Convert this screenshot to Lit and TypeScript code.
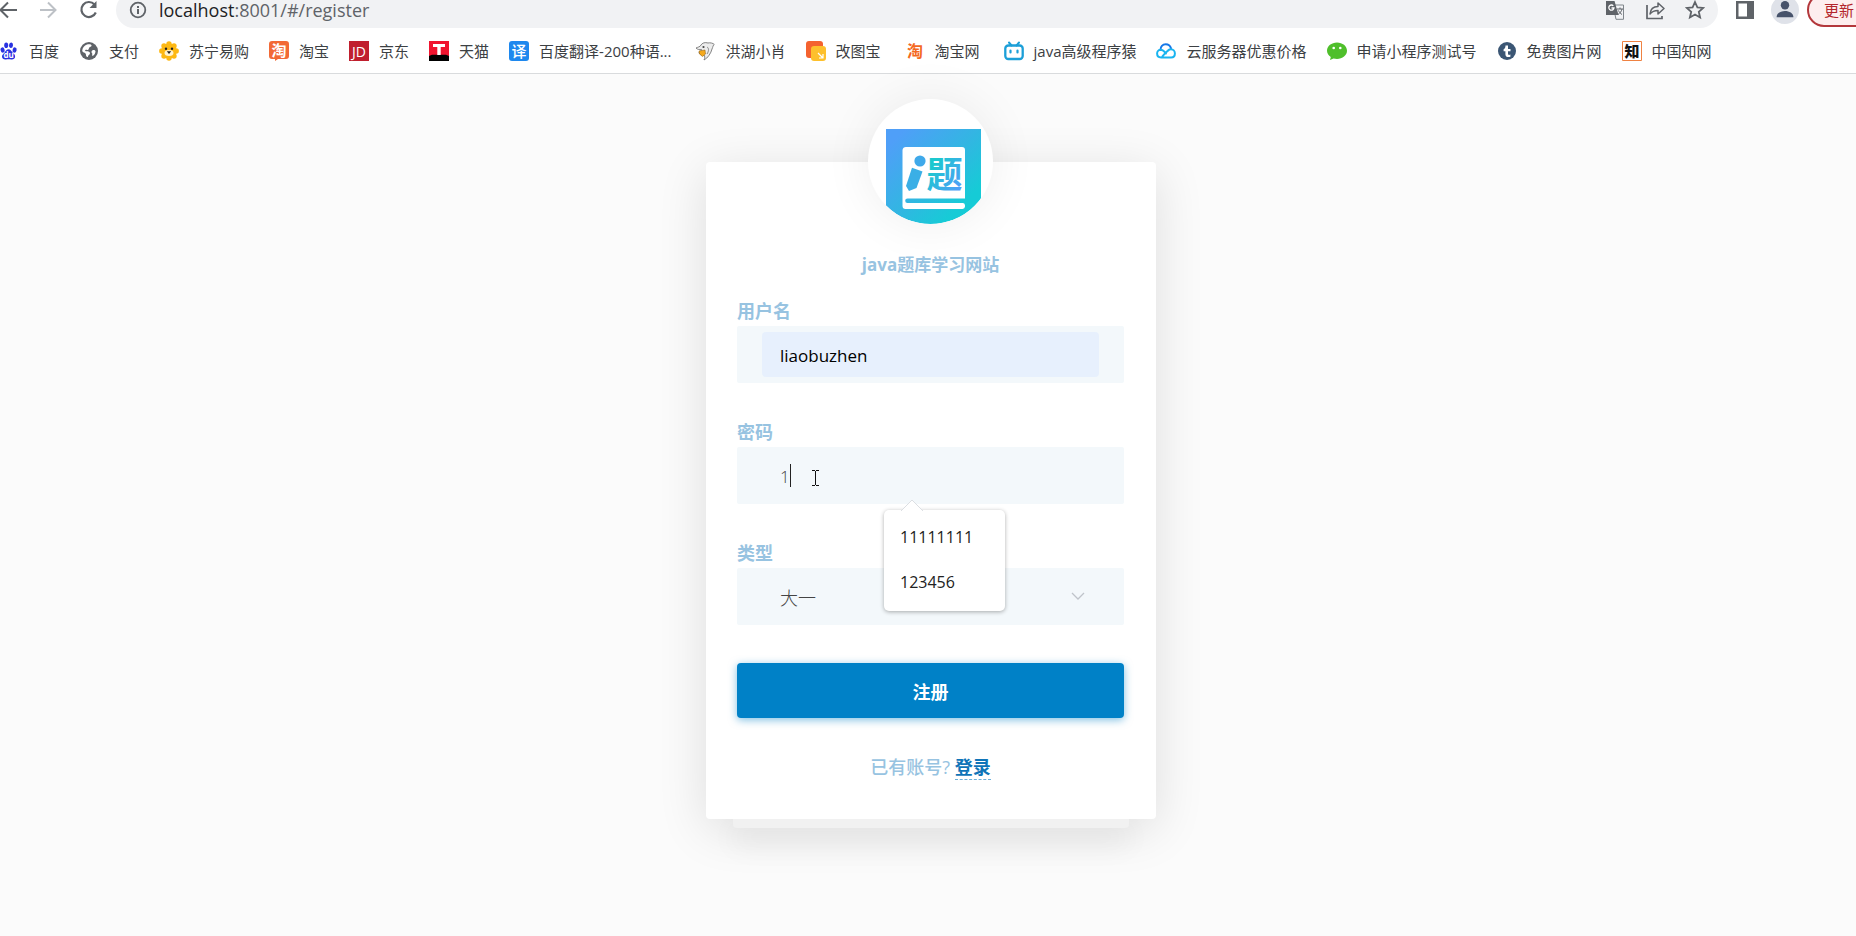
import { LitElement, html, svg, css } from "lit";
import { customElement, state } from "lit/decorators.js";

const icon = (size: number, body: unknown) =>
  html`<svg width=${size} height=${size} viewBox="0 0 20 20" aria-hidden="true">${body}</svg>`;

const bookmarks: { name: string; wide?: boolean; art: unknown }[] = [
  {
    name: "百度",
    art: svg`<g fill="#2932e1">
      <ellipse cx="3.6" cy="9" rx="2" ry="2.7" transform="rotate(-15 3.6 9)"/>
      <ellipse cx="7.2" cy="4.3" rx="2" ry="2.8"/>
      <ellipse cx="12" cy="4.3" rx="2" ry="2.8" transform="rotate(8 12 4.3)"/>
      <ellipse cx="15.6" cy="9" rx="2" ry="2.7" transform="rotate(15 15.6 9)"/>
      <path d="M9.5 8.2c2 0 2.700 1.800 4 3.200 1.300 1.300 2.800 2.200 2.600 4.300-.2 2-2 3-3.800 2.700-1.800-.3-3.600-.3-5.400 0C5 18.700 3.200 17.800 3 15.700c-.1-2 1.400-3 2.600-4.300 1.300-1.400 2-3.200 3.900-3.200z"/></g>
      <text x="9.600" y="17" font-size="8" font-weight="700" fill="#fff" text-anchor="middle">du</text>`,
  },
  {
    name: "支付",
    art: svg`<circle cx="10" cy="10" r="9" fill="#5f6368"/>
      <path fill="#fff" d="M8 3.600c2-.8 4.500-.3 4.600 1 0 1.200-1.800 1.200-2.400 2.200-.5.900-.1 1.400-1 1.900-.9.500-2.200-.2-3 .5-.5.700.5 1.100 1.500 1.100 1.700 0 3.300.4 3.300 1.900 0 1.500-1.800 1.700-2 3.200-.1.800-.7.700-1.200.3-1.300-1-.4-2.400-1.300-3.300-1-.9-2.500-.9-3.300-2.400.100-3 2-5.400 4.800-6.400zM14.200 9c1.300-.3 2 .3 2.300 1.300-.2 2-1 3.500-2.500 4.500-.9.300-1.200-.6-.7-1.500.400-.8-.8-1.300-.8-2.400 0-1 .8-1.700 1.700-1.900z"/>`,
  },
  {
    name: "苏宁易购",
    art: svg`<g fill="#fdb813"><circle cx="10" cy="10" r="7.600"/><circle cx="10" cy="3" r="2.700"/><circle cx="15" cy="5" r="2.700"/><circle cx="17.200" cy="10" r="2.700"/><circle cx="15" cy="15" r="2.700"/><circle cx="10" cy="17" r="2.700"/><circle cx="5" cy="15" r="2.700"/><circle cx="2.800" cy="10" r="2.700"/><circle cx="5" cy="5" r="2.700"/></g>
      <ellipse cx="10" cy="12" rx="4.500" ry="3" fill="#fff3d0"/>
      <circle cx="7" cy="7.800" r="1.200" fill="#222"/><circle cx="13" cy="7.800" r="1.200" fill="#222"/>
      <path d="M7.800 10.300h4.400L10 13z" fill="#222"/>`,
  },
  {
    name: "淘宝",
    art: svg`<path fill="#f26a36" d="M3 0h14a3 3 0 0 1 3 3v12a3 3 0 0 1-3 3H9l-3 2v-2H3a3 3 0 0 1-3-3V3a3 3 0 0 1 3-3z"/>
      <text x="10" y="14.500" font-size="15" font-weight="700" fill="#fff" text-anchor="middle">淘</text>`,
  },
  {
    name: "京东",
    art: svg`<path fill="#c01f2e" d="M0 0h20v20H0z"/>
      <text x="10" y="15.500" font-size="14" font-weight="500" fill="#fff" text-anchor="middle">JD</text>`,
  },
  {
    name: "天猫",
    art: svg`<path fill="#f0142f" d="M0 0h20v15H0z"/><path d="M0 20v-5l3-1.200h14l3 1.200v5z"/>
      <path fill="#fff" d="M4 3h12v3h-4.300v8H8.300V6H4z"/>`,
  },
  {
    name: "百度翻译-200种语...",
    wide: true,
    art: svg`<rect width="20" height="20" rx="3" fill="#1e88ee"/>
      <text x="10" y="15.500" font-size="15" font-weight="500" fill="#fff" text-anchor="middle">译</text>`,
  },
  {
    name: "洪湖小肖",
    art: svg`<path fill="#ececec" stroke="#777" stroke-width=".9" d="M1 7C3 6 5 6 6 4c1-2 4-3 7-2 2-.5 5 0 6.300 1.500C18 4 18 6 17 8c-1 4-4 9-8 11 1-2 1-4 0-5-3 .5-5-1-5-3 1.500 0 2-1 2.500-2.500C4.500 9 2.500 8.500 1 7z"/>
      <path fill="#f5a91d" stroke="#8a5a10" stroke-width=".5" d="M4 10l6-1 .5 4-3 2.500L4.500 13z"/><circle cx="8.500" cy="6" r="1.100" fill="#444"/>
      <path d="M12 6c2 1 2 4 0 7" fill="none" stroke="#888"/>`,
  },
  {
    name: "改图宝",
    wide: true,
    art: svg`<rect width="17" height="17" rx="3" fill="#f4622f"/><rect x="5" y="5" width="15" height="15" rx="3" fill="#fdc02c"/>
      <path d="M12 12l5 5m0-4v4h-4" fill="none" stroke="#fff" stroke-width="1.200"/>`,
  },
  {
    name: "淘宝网",
    wide: true,
    art: svg`<text x="10" y="15.500" font-size="16" font-weight="700" fill="#f4691f" text-anchor="middle">淘</text>`,
  },
  {
    name: "java高级程序猿",
    art: svg`<path d="M5 1.500l2.500 3M15 1.500l-2.500 3" stroke="#1c9fd8" stroke-width="2" stroke-linecap="round"/>
      <rect x="1.300" y="4.500" width="17.400" height="13.500" rx="3" fill="none" stroke="#1c9fd8" stroke-width="2.300"/>
      <path d="M6.500 9.500v2M13.500 9.500v2" stroke="#1c9fd8" stroke-width="2.200" stroke-linecap="round"/>`,
  },
  {
    name: "云服务器优惠价格",
    art: svg`<g fill="none" stroke-width="2" stroke-linecap="round"><path stroke="#1677e8" d="M4.500 9C4.300 5.500 6.700 3.300 9.700 3.300c2.500 0 4.500 1.400 5.300 4"/>
      <path stroke="#19b4f0" d="M10 12.500C8 10 6.500 8.800 4.700 8.800 2.600 8.800 1.100 10.500 1.100 12.600c0 2.300 1.500 3.900 4 3.900h10c2.300 0 3.800-1.700 3.800-4 0-2.400-1.800-4.200-4-4.200-2.200 0-3.200 1.200-8.500 7"/></g>`,
  },
  {
    name: "申请小程序测试号",
    art: svg`<path fill="#4fbf2b" d="M10 1.500c5.500 0 10 3.600 10 8.200s-4.500 8.200-10 8.200c-1.200 0-2.400-.2-3.500-.5L3 19l.8-3C1.500 14.500 0 12.300 0 9.700c0-4.600 4.500-8.200 10-8.200z"/>
      <circle cx="6.700" cy="7" r="1.300" fill="#fff"/><circle cx="13.300" cy="7" r="1.300" fill="#fff"/>`,
  },
  {
    name: "免费图片网",
    art: svg`<circle cx="10" cy="10" r="9" fill="#3b5674"/>
      <path fill="#fff" d="M8.500 4.500H11V8h2.500v2.200H11v2.600c0 1.200 1 1.300 2.400.8v2.100c-2.700 1-5 .1-5-2.500v-3H6.600V8.300c1.200-.4 1.900-1.600 1.900-3.800z"/>`,
  },
  {
    name: "中国知网",
    art: svg`<path fill="#fff" stroke="#ef8242" d="M.5.5h19v19H.5z"/>
      <text x="10" y="15.500" font-size="15" font-weight="900" fill="#111" text-anchor="middle">知</text>`,
  },
];

@customElement("browser-bar")
class BrowserBar extends LitElement {
  static styles = css`
    :host {
      display: block;
      overflow: hidden;
      background: #fff;
      border-bottom: 1px solid #d9dbdd;
    }
    .toolbar {
      display: flex;
      align-items: center;
      height: 36px;
      margin-top: -8px;
    }
    svg {
      display: block;
      flex: none;
    }
    button {
      display: block;
      border: 0;
      padding: 0;
      background: none;
      font: inherit;
    }
    .nav {
      display: flex;
      gap: 20px;
      margin-left: -1px;
      padding-right: 17px;
    }
    .omnibox {
      flex: 1;
      display: flex;
      align-items: center;
      gap: 11px;
      height: 36px;
      padding: 0 13px 0 12px;
      border-radius: 18px;
      background: #f1f2f4;
    }
    .url {
      flex: 1;
      font-size: 18px;
      line-height: 20px;
      color: #5f6368;
    }
    .host {
      color: #202124;
    }
    .tools {
      display: flex;
      gap: 20px;
    }
    .profile {
      display: flex;
      align-items: center;
      gap: 16px;
      padding-left: 17px;
    }
    .update {
      box-sizing: border-box;
      width: 64px;
      height: 34px;
      margin: 0 -15px 0 -8px;
      padding-left: 15px;
      text-align: left;
      border: 2px solid #b3383c;
      border-radius: 17px;
      background: #fdeeee;
      color: #b3262c;
      font-size: 15px;
      line-height: 28px;
      white-space: nowrap;
    }
    .bookmarks {
      display: flex;
      gap: 20px;
      height: 45px;
      margin-left: -1px;
      align-items: center;
    }
    .bookmark {
      display: flex;
      align-items: center;
      gap: 10px;
      font-size: 15px;
      line-height: 22px;
      color: #3c4043;
      text-decoration: none;
      white-space: nowrap;
    }
    .wide {
      padding-right: 4px;
    }
  `;

  render() {
    return html`
      <div class="toolbar">
        <div class="nav">
          <button aria-label="后退">${icon(20, svg`<path d="M18 10H1.500M9 2.500L1.500 10 9 17.500" fill="none" stroke="#5f6368" stroke-width="2"/>`)}</button>
          <button aria-label="前进">${icon(20, svg`<path d="M1 10h15.500M9 2.500l7.500 7.500L9 17.500" fill="none" stroke="#bdc1c6" stroke-width="2"/>`)}</button>
          <button aria-label="重新加载">${icon(20, svg`<path d="M15.500 4.500A7.500 7.500 0 1 0 16.800 12.500" fill="none" stroke="#5f6368" stroke-width="2.200"/><path d="M17.500 1v7h-7z" fill="#5f6368"/>`)}</button>
        </div>
        <div class="omnibox">
          ${icon(20, svg`<circle cx="10" cy="10" r="7.300" fill="none" stroke="#5f6368" stroke-width="1.800"/><path d="M9 9h2v5H9zM9 6h2v2H9z" fill="#5f6368"/>`)}
          <div class="url"><span class="host">localhost</span>:8001/#/register</div>
          <div class="tools">
            <button aria-label="翻译">${icon(20, svg`<path d="M8 5h10.500v14.300H11z" fill="#f1f2f4" stroke="#80868b"/><path d="M1 1h8.500l4 14H1z" fill="#5f6368"/>
              <path d="M8.300 5.800A2.600 2.600 0 1 0 9 8H6.500" fill="none" stroke="#fff" stroke-width="1.300"/><path d="M12 9h6M15 7.500V9m2 0c-.5 2.500-2 4-4 5.500m.5-4c.5 1.500 2 3 3.500 4" fill="none" stroke="#5f6368"/>`)}</button>
            <button aria-label="分享">${icon(20, svg`<path d="M2 5v13.500h15V16" fill="none" stroke="#5f6368" stroke-width="1.700"/><path d="M5 14c.5-5 3.500-7.500 8-7.500V3l6 5.500-6 5.500v-3.500c-3.500 0-6 1-8 3.500z" fill="none" stroke="#5f6368" stroke-width="1.500" stroke-linejoin="round"/>`)}</button>
            <button aria-label="收藏">${icon(20, svg`<path d="M10 2l2.400 5.300 5.800.6-4.400 3.900 1.300 5.700-5.100-3-5.100 3 1.300-5.700-4.400-3.900 5.800-.6z" fill="none" stroke="#5f6368" stroke-width="1.800"/>`)}</button>
          </div>
        </div>
        <div class="profile">
          <button aria-label="侧边栏">${icon(20, svg`<path fill="#5f6368" fill-rule="evenodd" d="M1 1h18v18H1zM3.500 3.500v13H12v-13z"/>`)}</button>
          <button aria-label="用户">${icon(28, svg`<circle cx="10" cy="10" r="10" fill="#dfe2e9"/><circle cx="10" cy="6.600" r="3" fill="#47536b"/><path d="M4 15.200c0-6 12-6 12 0z" fill="#47536b"/>`)}</button>
          <button class="update">更新</button>
        </div>
      </div>
      <nav class="bookmarks">
        ${bookmarks.map(
          (b) => html`<a class="bookmark ${b.wide ? "wide" : ""}" href="#">${icon(20, b.art)}<span>${b.name}</span></a>`
        )}
      </nav>
    `;
  }
}

@customElement("register-card")
class RegisterCard extends LitElement {
  static styles = css`
    :host {
      display: block;
      width: 450px;
      max-width: 100%;
    }
    .card {
      box-sizing: border-box;
      padding: 0 32px 39px 31px;
      border-radius: 4px;
      background: #fff;
      box-shadow: 0 10px 50px rgba(0, 0, 0, 0.12);
      display: flex;
      flex-direction: column;
    }
    .under {
      height: 9px;
      margin: 0 27px;
      border-radius: 0 0 4px 4px;
      background: #f1f1f1;
      box-shadow: 0 14px 28px rgba(0, 0, 0, 0.1);
      clip-path: inset(0 -60px -60px -60px);
    }
    .logo {
      display: block;
      align-self: center;
      width: 125px;
      height: 125px;
      margin-top: -63px;
      border-radius: 50%;
      background: #fff;
      box-shadow: 0 0 50px rgba(0, 0, 0, 0.07);
    }
    .title {
      margin: 29px 0 22px;
      text-align: center;
      font-size: 17px;
      line-height: 24px;
      font-weight: 700;
      color: #97c3e1;
    }
    form {
      display: flex;
      flex-direction: column;
    }
    .fields {
      display: grid;
      gap: 37px;
    }
    .field {
      position: relative;
      display: grid;
      gap: 3px;
    }
    label {
      font-size: 18px;
      line-height: 24px;
      font-weight: 700;
      color: #97c3e1;
    }
    .box {
      position: relative;
      display: flex;
      align-items: center;
      height: 57px;
      padding: 0 25px;
      border-radius: 2px;
      background: #f3f8fb;
    }
    input,
    select {
      box-sizing: border-box;
      appearance: none;
      flex: 1;
      min-width: 0;
      height: 45px;
      border: 0;
      border-radius: 4px;
      padding: 2px 18px 0;
      outline: 0;
      background: transparent;
      font-family: inherit;
      font-size: 17px;
      font-weight: 300;
      color: #444;
    }
    select {
      font-size: 18px;
    }
    .filled {
      background: #e7f0fd;
      color: #000;
      font-weight: 400;
    }
    .caret {
      position: absolute;
      left: 53px;
      top: 17px;
      width: 1px;
      height: 23px;
      background: #222;
    }
    .pointer {
      position: absolute;
      left: 74px;
      top: 22px;
    }
    .chevron {
      position: absolute;
      right: 38px;
      top: 20px;
      pointer-events: none;
    }
    .menu {
      position: absolute;
      z-index: 1;
      left: 147px;
      top: 90px;
      box-sizing: border-box;
      width: 121px;
      margin: 0;
      padding: 4px 0 7px;
      list-style: none;
      border-radius: 5px;
      background: #fff;
      box-shadow: 0 1px 4px rgba(0, 0, 0, 0.32);
    }
    .tip {
      position: absolute;
      left: 16px;
      top: -11px;
    }
    .option {
      display: block;
      width: 100%;
      height: 45px;
      padding: 0 16px;
      border: 0;
      background: none;
      text-align: left;
      font-family: inherit;
      font-size: 16px;
      color: #222;
    }
    .submit {
      height: 55px;
      margin: 38px 0 37px;
      border: 0;
      border-radius: 4px;
      background: #0081c7;
      box-shadow: 0 2px 8px rgba(0, 129, 199, 0.5);
      color: #fff;
      font-family: inherit;
      font-size: 18px;
      font-weight: 700;
    }
    .login {
      margin: 0;
      text-align: center;
      font-size: 18px;
      line-height: 24px;
      font-weight: 500;
      color: #97c3e1;
    }
    .link {
      display: inline-block;
      color: #0f74b8;
      font-weight: 700;
      text-decoration: none;
      border-bottom: 1px dashed #6cb0da;
    }
  `;

  @state() private password = "1";

  private pick(value: string) {
    this.password = value;
  }

  render() {
    return html`
      <div class="card">
        <svg class="logo" viewBox="0 0 125 125" role="img" aria-label="i题">
          <defs>
            <linearGradient id="sky" x1="0" y1="0" x2="1" y2="1">
              <stop offset=".1" stop-color="#4f9ff8" />
              <stop offset=".5" stop-color="#32b6e2" />
              <stop offset=".8" stop-color="#16cbd6" />
            </linearGradient>
            <linearGradient id="ink" x1="0" y1="0" x2="1" y2="1">
              <stop offset=".25" stop-color="#1cc8cf" />
              <stop offset=".85" stop-color="#4f9ff8" />
            </linearGradient>
            <clipPath id="disc"><circle cx="62.500" cy="62.500" r="62.500" /></clipPath>
          </defs>
          <path d="M18 30h95v95H18z" fill="url(#sky)" clip-path="url(#disc)" />
          <path fill="#fff" d="M38 48h56a3 3 0 0 1 3 3v48.500H39.500a2.300 2.300 0 0 0 0 4.600H95a2.500 2.500 0 0 1 2 2.500v1a2.500 2.500 0 0 1-2.500 2.400H37.500a3 3 0 0 1-3-3V51a3.500 3.500 0 0 1 3.500-3z" />
          <circle cx="52" cy="62" r="5.600" fill="#3fa9ea" />
          <path d="M44 68.700l10.500 3.800L48.500 89 41 92l-3-5z" fill="#3aafe6" />
          <text x="76.500" y="89" font-size="36" font-weight="700" text-anchor="middle" fill="url(#ink)">题</text>
        </svg>
        <h1 class="title">java题库学习网站</h1>
        <form @submit=${(e: Event) => e.preventDefault()}>
          <div class="fields">
            <div class="field">
              <label for="user">用户名</label>
              <div class="box"><input id="user" class="filled" type="text" value="liaobuzhen" autocomplete="off" spellcheck="false" /></div>
            </div>
            <div class="field">
              <label for="pass">密码</label>
              <div class="box">
                <input id="pass" type="text" .value=${this.password} autocomplete="off" />
                <span class="caret"></span>
                <svg class="pointer" width="9" height="18" viewBox="0 0 9 18" aria-hidden="true">
                  <path d="M1 1.500h3M5 1.500h3M4.500 2v14M1 16.500h3M5 16.500h3" stroke="#111" fill="none" />
                </svg>
              </div>
              <div class="menu">
                <svg class="tip" width="24" height="12" viewBox="0 0 24 12" aria-hidden="true">
                  <path d="M1 12L12 1l11 11" fill="#fff" stroke="#dcdfe3" />
                </svg>
                ${["11111111", "123456"].map(
                  (v) => html`<button type="button" class="option" @click=${() => this.pick(v)}>${v}</button>`
                )}
              </div>
            </div>
            <div class="field">
              <label for="kind">类型</label>
              <div class="box">
                <select id="kind"><option>大一</option></select>
                <svg class="chevron" width="16" height="16" viewBox="0 0 16 16" aria-hidden="true">
                  <path d="M2 5l6 6 6-6" fill="none" stroke="#bfc4ca" stroke-width="1.300" />
                </svg>
              </div>
            </div>
          </div>
          <button class="submit" type="submit">注册</button>
        </form>
        <p class="login">已有账号? <a class="link" href="#/login">登录</a></p>
      </div>
      <div class="under"></div>
    `;
  }
}

@customElement("app-root")
class AppRoot extends LitElement {
  static styles = css`
    :host {
      display: flex;
      flex-direction: column;
      min-height: 100vh;
      overflow: hidden;
      background: #fbfbfb;
      font-family: "Open Sans", "Noto Sans CJK SC", sans-serif;
    }
    .page {
      flex: 1;
      display: flex;
      justify-content: center;
      align-items: flex-start;
      padding: 88px 0 40px 6px;
    }
  `;

  render() {
    return html`
      <browser-bar></browser-bar>
      <main class="page"><register-card></register-card></main>
    `;
  }
}
